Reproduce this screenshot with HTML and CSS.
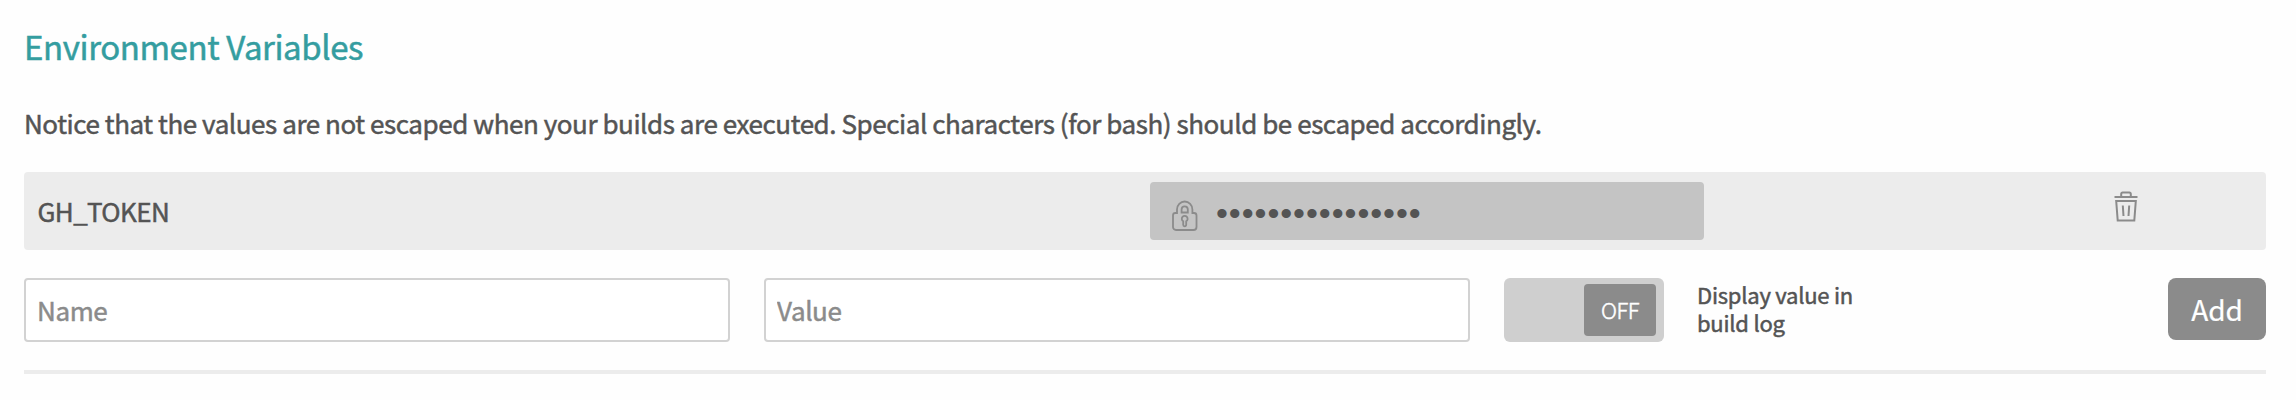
FILE: index.html
```html
<!DOCTYPE html>
<html lang="en">
<head>
<meta charset="utf-8">
<title>Environment Variables</title>
<link rel="stylesheet" href="styles.css">
</head>
<body>
<main class="panel">
  <h2 class="title">Environment Variables</h2>
  <p class="notice">Notice that the values are not escaped when your builds are executed. Special characters (for bash) should be escaped accordingly.</p>
  <div class="variable">
    <span class="variable-name">GH_TOKEN</span>
    <div class="secret">
      <svg class="lock" width="26" height="32" viewBox="0 0 26 32" fill="none" stroke="#8b8b8b" stroke-width="1.8">
        <path d="M3.5 13H5V9.500a7.700 8 0 0 1 15.400 0V13h1.600a2.500 2.500 0 0 1 2.500 2.500V27a3 3 0 0 1-3 3H4a3 3 0 0 1-3-3V15.500a2.500 2.500 0 0 1 2.500-2.500Z"/>
        <path d="M9.600 12.500V9.500a3.100 3.100 0 0 1 6.200 0V12.500Z"/>
        <path d="M11.200 21.300a2.900 2.900 0 1 1 3 0V24.800a1.500 1.500 0 0 1-3 0Z"/>
      </svg>
      <span class="dots">••••••••••••••••</span>
    </div>
    <svg class="trash" width="24" height="31" viewBox="0 0 24 31" fill="none" stroke="#8b8b8b" stroke-width="2">
      <path d="M.500 6H23.500M7.200 6V3a1.500 1.500 0 0 1 1.500-1.500h6.600A1.500 1.500 0 0 1 16.800 3V6M2.200 10H21.800L20.300 29.500H3.700ZM8.800 14.500l.7 10.500M15.200 14.500l-.7 10.500"/>
    </svg>
  </div>
  <form class="add-form">
    <input class="field" type="text" placeholder="Name">
    <input class="field" type="text" placeholder="Value">
    <div class="toggle"><span class="knob">OFF</span></div>
    <span class="hint">Display value in build log</span>
    <button class="add" type="button">Add</button>
  </form>
</main>
</body>
</html>
```
FILE: styles.css
```css
* { box-sizing: border-box; }
body {
  margin: 0;
  background: #fefefe;
  color: #545454;
  font-family: "Noto Sans CJK SC", "Noto Sans", sans-serif;
  -webkit-text-stroke-width: 0.5px;
}
.panel {
  margin: 0 30px 0 24px;
  height: 374px;
  padding-top: 22px;
  border-bottom: 4px solid #ececec;
}
.title {
  margin: 0;
  height: 48px;
  line-height: 48px;
  font-size: 33px;
  font-weight: 400;
  letter-spacing: -0.42px;
  color: #349da0;
}
.notice {
  margin: 33px 0 29px;
  height: 40px;
  line-height: 40px;
  font-size: 26px;
  font-weight: 400;
  letter-spacing: -0.44px;
  white-space: nowrap;
}
.variable {
  display: flex;
  align-items: flex-start;
  height: 78px;
  padding: 10px 0 10px 13.5px;
  border-radius: 4px;
  background: #ececec;
}
.variable-name {
  width: 1112.5px;
  line-height: 58px;
  font-size: 26px;
  letter-spacing: -0.6px;
}
.secret {
  display: flex;
  width: 554px;
  height: 58px;
  padding-left: 22px;
  border-radius: 4px;
  background: #c4c4c4;
}
.lock { margin-top: 18px; }
.dots {
  margin-left: 18px;
  font-family: "Liberation Sans", sans-serif;
  line-height: 62px;
  font-size: 34px;
  letter-spacing: 0.95px;
  -webkit-text-stroke-width: 0;
}
.trash { margin: 8.5px 0 0 409.5px; }
.add-form {
  display: flex;
  margin-top: 28px;
}
.field {
  width: 706px;
  height: 64px;
  margin: 0 34px 0 0;
  padding: 0 11px 2px;
  border: 2px solid #d2d2d2;
  border-radius: 4px;
  background: #fff;
  font: 400 26px "Noto Sans CJK SC", sans-serif;
  letter-spacing: -0.4px;
}
.field::placeholder { color: #8b8b8b; }
.toggle {
  display: flex;
  justify-content: flex-end;
  width: 160px;
  height: 64px;
  padding: 6px 8px;
  border-radius: 6px;
  background: #cfcfcf;
}
.knob {
  width: 72px;
  height: 52px;
  border-radius: 4px;
  background: #8b8b8b;
  color: #fff;
  font-size: 22px;
  font-weight: 300;
  line-height: 50px;
  letter-spacing: -0.5px;
  text-align: center;
}
.hint {
  width: 190px;
  margin: 2px 0 0 33px;
  font-size: 22px;
  line-height: 28px;
  letter-spacing: -0.23px;
}
.add {
  width: 98px;
  height: 62px;
  margin-left: auto;
  padding: 0 0 1px;
  border: 0;
  border-radius: 8px;
  background: #8b8b8b;
  color: #fff;
  font: 400 28px "Noto Sans CJK SC", sans-serif;
  -webkit-text-stroke-width: 0.2px;
}
```
